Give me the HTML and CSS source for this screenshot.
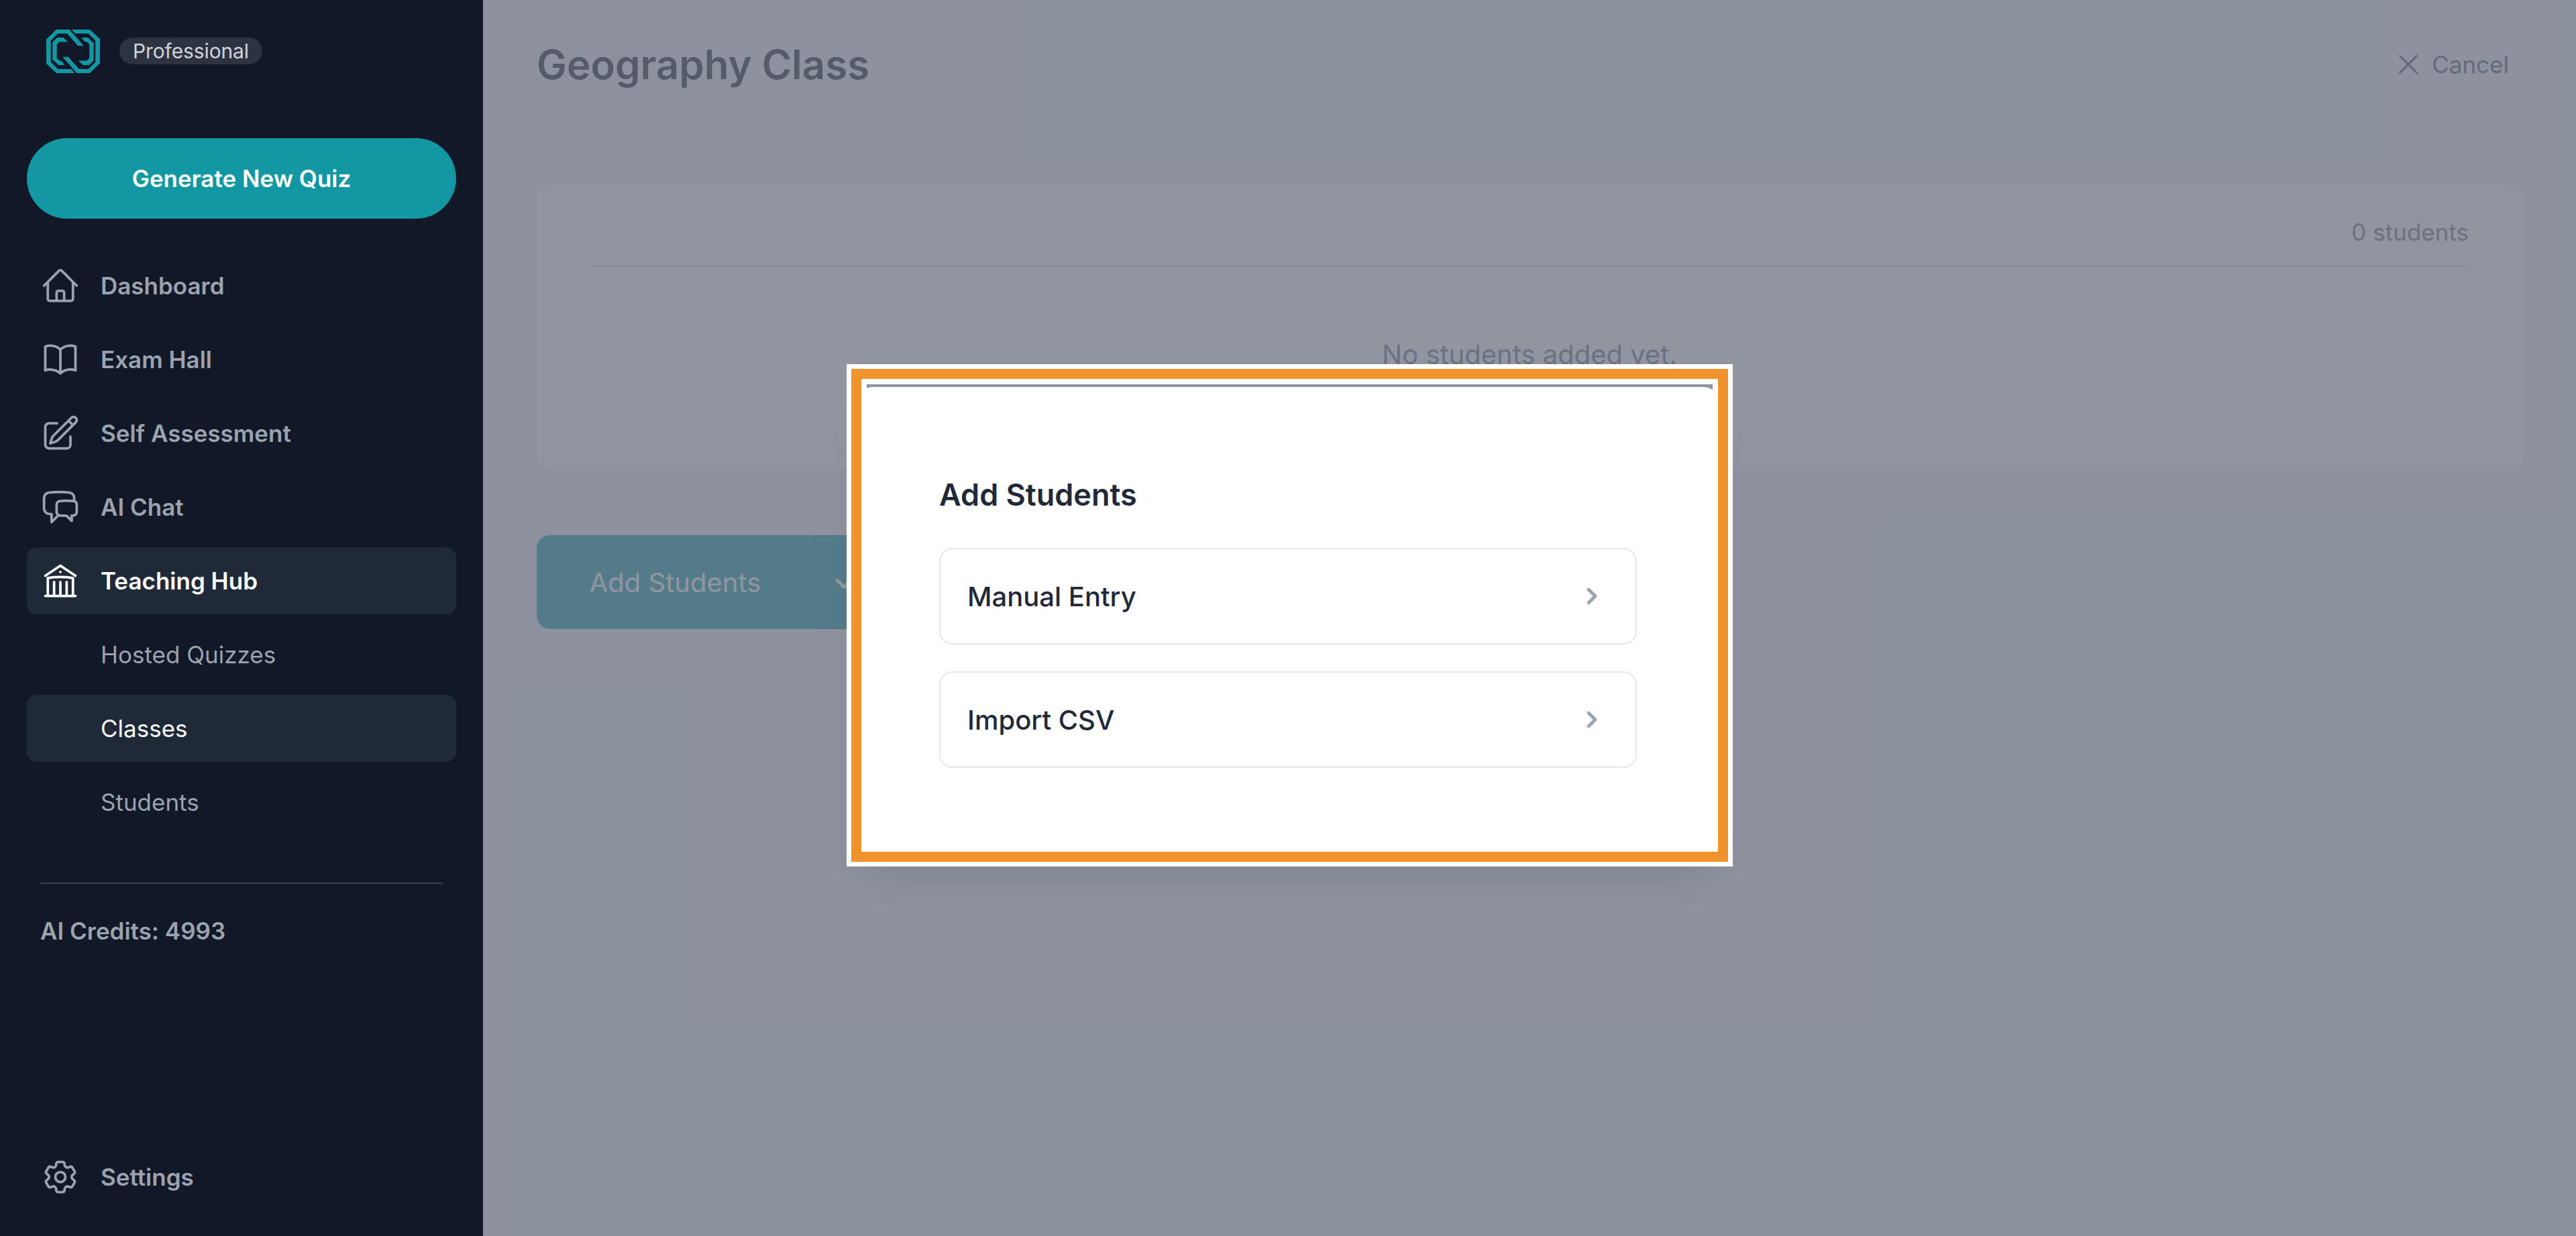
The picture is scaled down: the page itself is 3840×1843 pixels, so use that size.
FILE: index.html
```html
<!DOCTYPE html>
<html lang="en">
<head>
<meta charset="utf-8">
<title>Geography Class</title>
<link rel="stylesheet" href="styles.css">
</head>
<body>
<div class="app">
  <aside class="sidebar">
    <div class="brand">
      <svg class="logo" viewBox="58 71 239 193" preserveAspectRatio="none" fill="currentColor">
        <g id="link-half">
          <path d="M184 264H103L58 222V115L103 71H161L225 143H199L151 89H110L78 120V215L110 246H168Z"/>
          <path d="M107 107H134L154 126H116L105 137V198L117 210H126L140 228H112L86 203V127Z"/>
        </g>
        <use href="#link-half" transform="rotate(180 177.5 167.5)"/>
      </svg>
      <span class="plan">Professional</span>
    </div>
    <button class="generate">Generate New Quiz</button>
    <nav class="nav">
      <a class="nav-item"><svg class="icon" viewBox="0 0 24 24"><path d="m2.25 12 8.954-8.955c.44-.439 1.152-.439 1.591 0L21.75 12M4.5 9.75v10.125c0 .621.504 1.125 1.125 1.125H9.75v-4.875c0-.621.504-1.125 1.125-1.125h2.25c.621 0 1.125.504 1.125 1.125V21h4.125c.621 0 1.125-.504 1.125-1.125V9.75M8.25 21h8.25"/></svg>Dashboard</a>
      <a class="nav-item"><svg class="icon" viewBox="0 0 24 24"><path d="M12 6.042A8.967 8.967 0 0 0 6 3.75c-1.052 0-2.062.18-3 .512v14.25A8.987 8.987 0 0 1 6 18c2.305 0 4.408.867 6 2.292m0-14.25a8.966 8.966 0 0 1 6-2.292c1.052 0 2.062.18 3 .512v14.25A8.987 8.987 0 0 0 18 18a8.967 8.967 0 0 0-6 2.292m0-14.25v14.25"/></svg>Exam Hall</a>
      <a class="nav-item"><svg class="icon" viewBox="0 0 24 24"><path d="m16.862 4.487 1.687-1.688a1.875 1.875 0 1 1 2.652 2.652L10.582 16.07a4.5 4.5 0 0 1-1.897 1.13L6 18l.8-2.685a4.5 4.5 0 0 1 1.13-1.897l8.932-8.931Zm0 0L19.5 7.125M18 14v4.75A2.25 2.25 0 0 1 15.75 21H5.25A2.25 2.25 0 0 1 3 18.75V8.25A2.25 2.25 0 0 1 5.25 6H10"/></svg>Self Assessment</a>
      <a class="nav-item"><svg class="icon" viewBox="0 0 24 24"><path d="M20.25 8.511c.884.284 1.5 1.128 1.5 2.097v4.286c0 1.136-.847 2.1-1.98 2.193-.34.027-.68.052-1.02.072v3.091l-3-3c-1.354 0-2.694-.055-4.02-.163a2.115 2.115 0 0 1-.825-.242m9.345-8.334a2.126 2.126 0 0 0-.476-.095 48.64 48.64 0 0 0-8.048 0c-1.131.094-1.976 1.057-1.976 2.192v4.286c0 .837.46 1.58 1.155 1.951m9.345-8.334V6.637c0-1.621-1.152-3.026-2.76-3.235A48.455 48.455 0 0 0 11.25 3c-2.115 0-4.198.137-6.24.402-1.608.209-2.76 1.614-2.76 3.235v6.226c0 1.621 1.152 3.026 2.76 3.235.577.075 1.157.14 1.74.194V21l4.155-4.155"/></svg>AI Chat</a>
      <a class="nav-item active"><svg class="icon" viewBox="0 0 24 24"><path d="M12 21v-8.25M15.75 21v-8.25M8.25 21v-8.25M3 9l9-6 9 6m-1.5 12V10.332A48.36 48.36 0 0 0 12 9.75c-2.551 0-5.056.2-7.5.582V21M3 21h18M12 6.75h.008v.008H12V6.75Z"/></svg>Teaching Hub</a>
      <a class="nav-item sub">Hosted Quizzes</a>
      <a class="nav-item sub active">Classes</a>
      <a class="nav-item sub">Students</a>
    </nav>
    <div class="credits">AI Credits: 4993</div>
    <a class="nav-item settings"><svg class="icon" viewBox="0 0 24 24"><path d="M9.594 3.94c.09-.542.56-.94 1.11-.94h2.593c.55 0 1.02.398 1.11.94l.213 1.281c.063.374.313.686.645.87.074.04.147.083.22.127.325.196.72.257 1.075.124l1.217-.456a1.125 1.125 0 0 1 1.37.49l1.296 2.247a1.125 1.125 0 0 1-.26 1.431l-1.003.827c-.293.241-.438.613-.43.992a7.723 7.723 0 0 1 0 .255c-.008.378.137.75.43.991l1.004.827c.424.35.534.955.26 1.43l-1.298 2.247a1.125 1.125 0 0 1-1.369.491l-1.217-.456c-.355-.133-.75-.072-1.076.124a6.47 6.47 0 0 1-.22.128c-.331.183-.581.495-.644.869l-.213 1.281c-.09.543-.56.94-1.11.94h-2.594c-.55 0-1.019-.398-1.11-.94l-.213-1.281c-.062-.374-.312-.686-.644-.87a6.52 6.52 0 0 1-.22-.127c-.325-.196-.72-.257-1.076-.124l-1.217.456a1.125 1.125 0 0 1-1.369-.49l-1.297-2.247a1.125 1.125 0 0 1 .26-1.431l1.004-.827c.292-.24.437-.613.43-.991a6.932 6.932 0 0 1 0-.255c.007-.38-.138-.751-.43-.992l-1.004-.827a1.125 1.125 0 0 1-.26-1.43l1.297-2.247a1.125 1.125 0 0 1 1.37-.491l1.216.456c.356.133.751.072 1.076-.124.072-.044.146-.086.22-.128.332-.183.582-.495.644-.869l.214-1.28Z"/><path d="M15 12a3 3 0 1 1-6 0 3 3 0 0 1 6 0Z"/></svg>Settings</a>
  </aside>

  <main class="main">
    <header class="page-head">
      <h1>Geography Class</h1>
      <button class="cancel"><svg class="icon-x" viewBox="0 0 24 24"><path d="M6 18 18 6M6 6l12 12"/></svg>Cancel</button>
    </header>
    <section class="card">
      <div class="count">0 students</div>
      <p class="empty">No students added yet.</p>
    </section>
    <div class="split">
      <button class="split-main">Add Students</button>
      <button class="split-more"><svg class="chevron" viewBox="0 0 50 50"><path d="m14.8 22.2 10.2 10.2 10.2-10.2"/></svg></button>
    </div>
  </main>

  <div class="overlay">
    <div class="dialog">
      <h2>Add Students</h2>
      <button class="option">Manual Entry<svg class="chevron" viewBox="0 0 50 50"><path d="m20.2 15.2 9.8 9.8-9.8 9.8"/></svg></button>
      <button class="option">Import CSV<svg class="chevron" viewBox="0 0 50 50"><path d="m20.2 15.2 9.8 9.8-9.8 9.8"/></svg></button>
    </div>
  </div>
  <div class="highlight"></div>
</div>
</body>
</html>
```
FILE: styles.css
```css
* { box-sizing: border-box; margin: 0; padding: 0; }

body {
  font-family: Inter, "Liberation Sans", sans-serif;
  font-size: 35px;
  line-height: 50px;
  background: #f3f4f6;
  overflow: hidden;
}

button { font: inherit; border: 0; background: none; color: inherit; }

.app { position: relative; display: flex; width: 3840px; height: 1843px; }

/* Sidebar */
.sidebar {
  display: flex;
  flex-direction: column;
  width: 720px;
  padding: 0 40px 38px;
  background: #111827;
  color: #9ca3af;
}

.brand { display: flex; align-items: center; gap: 29px; height: 152px; padding-left: 29px; }
.logo { width: 80px; height: 65px; color: #1398a3; }
.plan {
  height: 40px;
  padding: 0 20px;
  border-radius: 20px;
  background: #2d3340;
  color: #d1d5db;
  font-size: 30px;
  line-height: 40px;
  letter-spacing: -.12px;
}

.generate {
  height: 120px;
  margin-top: 54px;
  border-radius: 60px;
  background: #1398a3;
  color: #fff;
  font-weight: 600;
}

.nav { display: flex; flex-direction: column; gap: 10px; margin-top: 50px; }
.nav-item {
  display: flex;
  align-items: center;
  gap: 30px;
  height: 100px;
  padding: 0 20px;
  border-radius: 15px;
  font-weight: 600;
}
.nav-item.sub { padding-left: 110px; font-weight: 400; }
.nav-item.active { background: #1f2937; color: #fff; }

.icon, .icon-x, .chevron {
  fill: none;
  stroke: currentColor;
  stroke-width: 1.5;
  stroke-linecap: round;
  stroke-linejoin: round;
}
.icon { width: 60px; height: 60px; }

.credits {
  margin: 70px 20px 0;
  padding-top: 45px;
  border-top: 2px solid #374151;
  font-weight: 600;
}
.settings { margin-top: auto; }

/* Page */
.main { flex: 1; padding: 0 80px; }
.page-head { display: flex; align-items: center; justify-content: space-between; height: 192px; padding-right: 20px; }
.page-head h1 { color: #111827; font-size: 60px; font-weight: 600; line-height: 80px; }
.cancel { display: flex; align-items: center; gap: 10px; color: #4b5563; }
.icon-x { width: 50px; height: 50px; }

.card { height: 422px; margin-top: 84px; padding: 45px 80px; border-radius: 20px; background: #fff; color: #6b7280; }
.count { padding-bottom: 25px; border-bottom: 2px solid #d1d5db; text-align: right; }
.empty { padding-top: 101px; font-size: 40px; line-height: 60px; text-align: center; }

.split {
  display: flex;
  width: 550px;
  height: 140px;
  margin-top: 100px;
  border-radius: 20px;
  overflow: hidden;
  background: #1398a3;
  color: #fff;
}
.split-main { width: 413px; padding-top: 2px; font-size: 40px; }
.split-more { display: flex; flex: 1; align-items: center; padding-left: 18px; border: 2px solid #0f7f8c; }

.chevron { width: 50px; height: 50px; stroke-width: 5; }

/* Dialog */
.overlay {
  position: absolute;
  inset: 0 0 0 720px;
  display: flex;
  align-items: center;
  padding-left: 560px;
  background: rgba(107, 114, 128, .75);
}
.dialog {
  display: flex;
  flex-direction: column;
  gap: 40px;
  width: 1280px;
  padding: 120px 120px 121px;
  border-radius: 20px;
  background: #fff;
  box-shadow: 0 50px 62.5px -12.5px rgba(0, 0, 0, .1), 0 20px 25px -15px rgba(0, 0, 0, .1);
  color: #1f2937;
}
.dialog h2 { height: 80px; font-size: 45px; font-weight: 600; line-height: 82px; }
.option {
  display: flex;
  align-items: center;
  justify-content: space-between;
  height: 144px;
  padding: 0 40px;
  border: 2px solid #e5e7eb;
  border-radius: 20px;
  font-size: 40px;
  font-weight: 500;
  line-height: 51px;
}
.option .chevron { stroke: #9ca3af; }

/* Orange callout frame with a white edge on both sides */
.highlight {
  position: absolute;
  left: 1262px;
  top: 543px;
  width: 1321px;
  height: 749px;
  border: 7px solid #fff;
  outline: 15px solid #f0932b;
  outline-offset: -22px;
  box-shadow: inset 0 0 0 23px #fff;
}
```
